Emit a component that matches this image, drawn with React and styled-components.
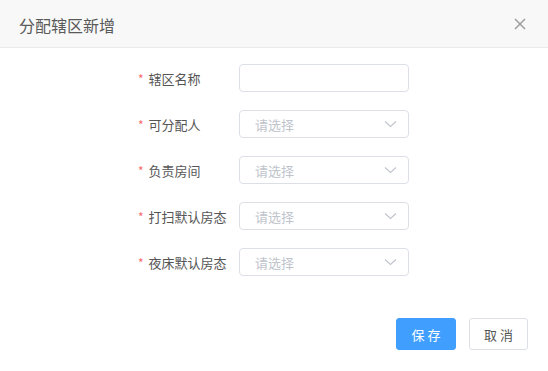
import styled, { createGlobalStyle } from "styled-components";

const GlobalStyle = createGlobalStyle`
  html, body {
    margin: 0;
    padding: 0;
    background: #fff;
  }
  body {
    font-family: "Noto Sans CJK SC", "Noto Sans", sans-serif;
  }
`;

const StyledDialog = styled.div`
  display: flex;
  flex-direction: column;
  width: 548px;
  height: 371px;
  background: #fff;
`;

const StyledHeader = styled.div`
  display: flex;
  align-items: center;
  justify-content: space-between;
  height: 48px;
  padding: 0 20px 0 19px;
  box-sizing: border-box;
  background: #f8f8f8;
  border-bottom: 1px solid #ebebeb;
`;

const StyledTitle = styled.div`
  font-size: 16px;
  color: #5a5a5a;
  padding-top: 2px;
`;

const StyledClose = styled.button`
  display: flex;
  align-items: center;
  justify-content: center;
  width: 16px;
  height: 16px;
  padding: 0;
  border: none;
  background: none;
  cursor: pointer;
`;

const StyledForm = styled.div`
  display: flex;
  flex-direction: column;
  align-items: center;
  gap: 18px;
  padding-top: 16px;
`;

const StyledRow = styled.div`
  display: flex;
  align-items: center;
  width: 272px;
  height: 28px;
`;

const StyledLabel = styled.div`
  display: flex;
  align-items: center;
  width: 101px;
  font-size: 13px;
  color: #555;
`;

const StyledStar = styled.span`
  color: #f56c6c;
  font-size: 12px;
  margin-right: 5px;
`;

const StyledInput = styled.div`
  display: flex;
  align-items: center;
  justify-content: space-between;
  width: 170px;
  height: 28px;
  box-sizing: border-box;
  padding: 0 11px 0 15px;
  border: 1px solid #dcdfe6;
  border-radius: 4px;
  font-size: 13px;
  color: #c0c4cc;
`;

const StyledFooter = styled.div`
  display: flex;
  justify-content: flex-end;
  gap: 13px;
  padding: 42px 20px 0 0;
`;

const StyledButton = styled.button`
  width: ${(p) => (p.$primary ? "60px" : "59px")};
  height: 32px;
  box-sizing: border-box;
  border-radius: 3px;
  border: 1px solid ${(p) => (p.$primary ? "#409eff" : "#dcdfe6")};
  background: ${(p) => (p.$primary ? "#409eff" : "#fff")};
  color: ${(p) => (p.$primary ? "#fff" : "#555")};
  font-family: inherit;
  font-size: 13px;
  letter-spacing: 3px;
  padding: 0 0 0 3px;
`;

function Chevron() {
  return (
    <svg width="13" height="8" viewBox="0 0 13 8">
      <path d="M1 1.5 L6.5 6.5 L12 1.5" fill="none" stroke="#c0c4cc" strokeWidth="1.1" />
    </svg>
  );
}

const fields = [
  { label: "辖区名称", select: false },
  { label: "可分配人", select: true },
  { label: "负责房间", select: true },
  { label: "打扫默认房态", select: true },
  { label: "夜床默认房态", select: true },
];

export default function App() {
  return (
    <StyledDialog>
      <GlobalStyle />
      <StyledHeader>
        <StyledTitle>分配辖区新增</StyledTitle>
        <StyledClose>
          <svg width="12" height="12" viewBox="0 0 12 12">
            <path d="M1 1 L11 11 M11 1 L1 11" stroke="#999" strokeWidth="1.4" />
          </svg>
        </StyledClose>
      </StyledHeader>
      <StyledForm>
        {fields.map((f) => (
          <StyledRow key={f.label}>
            <StyledLabel>
              <StyledStar>*</StyledStar>
              {f.label}
            </StyledLabel>
            <StyledInput>
              {f.select && (
                <>
                  <span>请选择</span>
                  <Chevron />
                </>
              )}
            </StyledInput>
          </StyledRow>
        ))}
      </StyledForm>
      <StyledFooter>
        <StyledButton $primary>保存</StyledButton>
        <StyledButton>取消</StyledButton>
      </StyledFooter>
    </StyledDialog>
  );
}
